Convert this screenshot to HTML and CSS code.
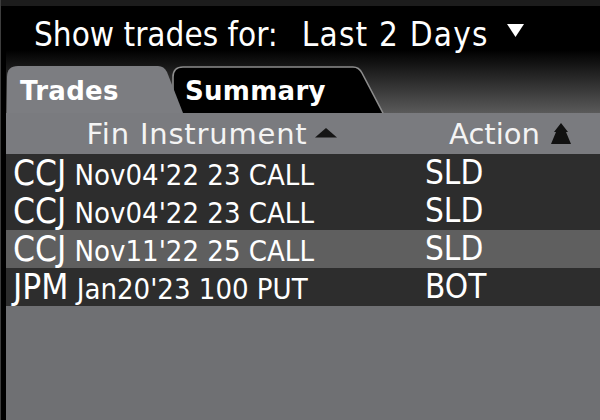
FILE: index.html
```html
<!DOCTYPE html>
<html>
<head>
<meta charset="utf-8">
<link rel="stylesheet" href="styles.css">
</head>
<body>
<div class="app">
  <div class="topband"></div>
  <div class="main">
    <div class="head">
      <div class="titlebar">
        <span class="title-label">Show trades for:</span>
        <span class="title-value">Last 2 Days</span>
        <svg class="caret" width="17" height="13" viewBox="0 0 17 13"><path d="M0 0 H17 L8.5 13 Z" fill="#fff"/></svg>
      </div>
      <div class="tabbar">
        <div class="tab tab-active">
          <svg class="tab-shape" width="176" height="47" viewBox="0 0 176 47"><path d="M0 47 V11 Q0 0 11 0 H151 Q157 0 160 6 L176 47 Z" fill="#7c7d81"/></svg>
          <span class="tab-label">Trades</span>
        </div>
        <div class="tab tab-inactive">
          <svg class="tab-shape" width="213" height="47" viewBox="0 0 213 47"><path d="M1 47 V11 Q1 1 11 1 H181 Q187 1 190 7 L211 47" fill="#000" stroke="#8c8c8c" stroke-width="1.6"/></svg>
          <span class="tab-label">Summary</span>
        </div>
      </div>
    </div>
    <div class="table">
      <div class="thead">
        <div class="th">
          <span class="th-inst">Fin Instrument</span>
          <svg class="sort-up" width="26" height="11" viewBox="0 0 26 11"><path d="M2 10.5 L13 1 L24 10.5 Z" fill="#151515"/></svg>
        </div>
        <div class="th">
          <span>Action</span>
          <svg class="sort-double" width="20" height="21" viewBox="0 0 20 21"><path d="M10 0 L17 9 L15 9 L20 21 L0 21 L5 9 L3 9 Z" fill="#111"/></svg>
        </div>
      </div>
      <div class="tr">
        <div class="td"><span class="sym">CCJ</span> <span class="desc">Nov04'22 23 CALL</span></div>
        <div class="td act">SLD</div>
      </div>
      <div class="tr">
        <div class="td"><span class="sym">CCJ</span> <span class="desc">Nov04'22 23 CALL</span></div>
        <div class="td act">SLD</div>
      </div>
      <div class="tr sel">
        <div class="td"><span class="sym">CCJ</span> <span class="desc">Nov11'22 25 CALL</span></div>
        <div class="td act">SLD</div>
      </div>
      <div class="tr">
        <div class="td"><span class="sym">JPM</span> <span class="desc">Jan20'23 100 PUT</span></div>
        <div class="td act">BOT</div>
      </div>
    </div>
  </div>
</div>
</body>
</html>
```

FILE: styles.css
```css
html, body {
  margin: 0;
  padding: 0;
  width: 600px;
  height: 420px;
  overflow: hidden;
  background: #000;
}

.app {
  height: 420px;
  border-left: 1px solid #3d3d3d;
  box-sizing: border-box;
  display: flex;
  flex-direction: column;
}

.topband {
  height: 6px;
  flex: none;
  background: #1c1c1c;
}

.main {
  flex: 1;
  display: flex;
  flex-direction: column;
  padding-left: 5px;
  background: #000;
}

.head {
  background: linear-gradient(to bottom, #000 0, #000 44px, #5a5a5a 107px);
}

.titlebar {
  height: 56px;
  display: flex;
  align-items: center;
  padding-left: 28px;
  color: #fff;
  font-family: "DejaVu Sans Condensed", "DejaVu Sans", sans-serif;
  font-stretch: condensed;
  font-size: 33px;
  white-space: nowrap;
}

.title-value {
  margin-left: 24px;
  letter-spacing: 1.2px;
}

.caret {
  margin-left: 18px;
  margin-bottom: 7px;
}

.tabbar {
  height: 51px;
  display: flex;
  align-items: flex-end;
  padding-left: 1px;
}

.tab {
  position: relative;
  height: 47px;
  box-sizing: border-box;
  display: flex;
  align-items: center;
  padding-left: 13px;
  padding-top: 3px;
  color: #fff;
  font-family: "DejaVu Sans", sans-serif;
  font-weight: bold;
  font-size: 26px;
  letter-spacing: 0.3px;
}

.tab-active {
  width: 176px;
  z-index: 2;
}

.tab-inactive {
  width: 213px;
  margin-left: -11px;
  padding-left: 13px;
  z-index: 1;
}

.tab-shape {
  position: absolute;
  left: 0;
  top: 0;
  z-index: -1;
}

.table {
  flex: 1;
  background: #6f7073;
  display: flex;
  flex-direction: column;
}

.thead {
  display: grid;
  grid-template-columns: 414px 1fr;
  height: 41px;
  background: #7a7b7f;
  color: #f4f4f4;
  font-family: "DejaVu Sans", sans-serif;
  font-size: 29px;
}

.th {
  display: flex;
  align-items: center;
  justify-content: center;
  white-space: nowrap;
}

.th-inst {
  letter-spacing: 0.8px;
}

.sort-up {
  margin-left: 6px;
  margin-bottom: 2px;
}

.sort-double {
  margin-left: 11px;
}

.tr {
  display: grid;
  grid-template-columns: 414px 1fr;
  height: 38px;
  background: #2d2d2d;
  color: #fff;
  font-family: "DejaVu Sans Condensed", "DejaVu Sans", sans-serif;
  font-stretch: condensed;
}

.tr.sel {
  background: #5f5f5f;
}

.td {
  line-height: 38px;
  white-space: nowrap;
  padding-left: 7px;
  font-size: 29px;
}

.sym {
  font-size: 35px;
}

.desc {
  font-size: 29px;
}

.td.act {
  padding-left: 5px;
  font-size: 33px;
}
```
